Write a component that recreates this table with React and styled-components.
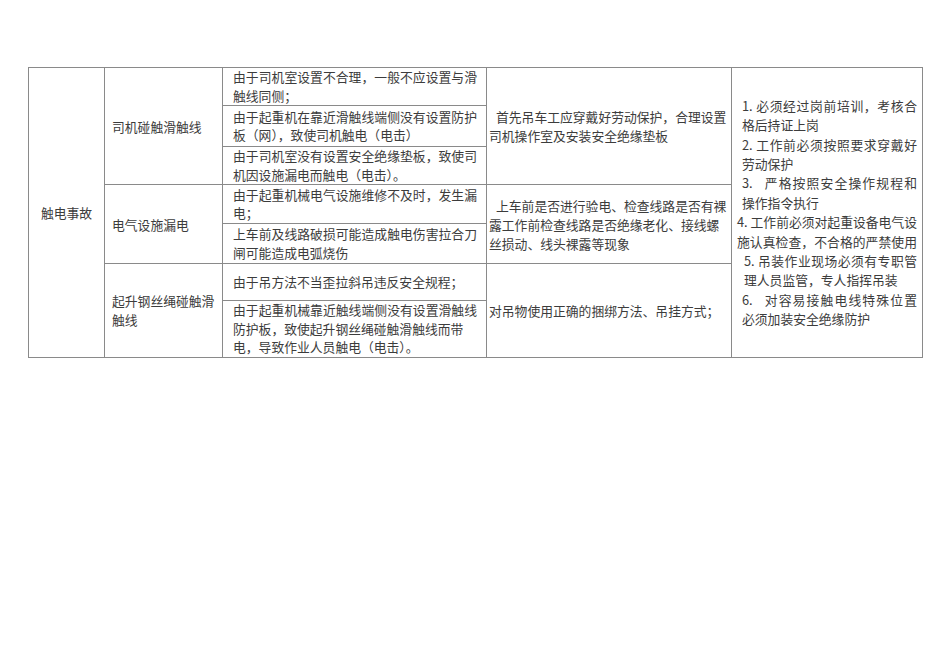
import React from "react";
import styled, { createGlobalStyle } from "styled-components";

const GlobalStyle = createGlobalStyle`
  html, body {
    margin: 0;
    padding: 0;
    background: #fff;
  }
  body {
    font-family: "Noto Sans CJK SC", "Liberation Serif", sans-serif;
    color: #333;
  }
`;

const Page = styled.div`
  width: 950px;
  height: 672px;
  padding: 67px 0 0 28px;
  box-sizing: border-box;
`;

const Table = styled.table`
  border-collapse: collapse;
  table-layout: fixed;
  width: 894px;
  font-size: 12.8px;
  color: #3c3c3c;
`;

const Row = styled.tr`
  height: ${(p) => p.h}px;
`;

const Cell = styled.td`
  border: 1px solid #8a8a8a;
  vertical-align: middle;
  padding: ${(p) => p.pad || "0 8px"};
  line-height: ${(p) => p.lh || 19}px;
  text-align: ${(p) => (p.center ? "center" : "left")};
  white-space: nowrap;
  overflow: hidden;
`;

const Line = styled.span`
  display: block;
  padding-left: ${(p) => p.indent || 0}px;
  text-align: ${(p) => (p.full ? "justify" : "left")};
  text-align-last: ${(p) => (p.full ? "justify" : "left")};
  white-space: pre;
`;

const causes = [
  { h: 38, lines: ["由于司机室设置不合理，一般不应设置与滑", "触线同侧；"] },
  { h: 41, lines: ["由于起重机在靠近滑触线端侧没有设置防护", "板（网），致使司机触电（电击）"] },
  { h: 37, lines: ["由于司机室没有设置安全绝缘垫板，致使司", "机因设施漏电而触电（电击）。"] },
  { h: 39, lines: ["由于起重机械电气设施维修不及时，发生漏", "电；"] },
  { h: 40, lines: ["上车前及线路破损可能造成触电伤害拉合刀", "闸可能造成电弧烧伤"] },
  { h: 37, lines: ["由于吊方法不当歪拉斜吊违反安全规程；"] },
  {
    h: 55,
    lines: [
      "由于起重机械靠近触线端侧没有设置滑触线",
      "防护板，致使起升钢丝绳碰触滑触线而带",
      "电，导致作业人员触电（电击）。",
    ],
  },
];

const measures = [
  { indent: 5, full: true, text: "1. 必须经过岗前培训，考核合" },
  { indent: 5, text: "格后持证上岗" },
  { indent: 5, full: true, text: "2. 工作前必须按照要求穿戴好" },
  { indent: 5, text: "劳动保护" },
  { indent: 5, full: true, text: "3.   严格按照安全操作规程和" },
  { indent: 5, text: "操作指令执行" },
  { indent: 0, full: true, text: "4. 工作前必须对起重设备电气设" },
  { indent: 0, full: true, text: "施认真检查，不合格的严禁使用" },
  { indent: 7, full: true, text: "5. 吊装作业现场必须有专职管" },
  { indent: 7, text: "理人员监管，专人指挥吊装" },
  { indent: 5, full: true, text: "6.   对容易接触电线特殊位置" },
  { indent: 5, text: "必须加装安全绝缘防护" },
];

const CauseCell = ({ lines }) => (
  <Cell lh={18.5} pad="0 9px 0 10px">
    {lines.map((l, i) => (
      <Line key={i} full={i === 0 && lines.length > 1 && l.length >= 19}>
        {l}
      </Line>
    ))}
  </Cell>
);

export default function App() {
  return (
    <>
      <GlobalStyle />
      <Page>
        <Table>
          <colgroup>
            <col style={{ width: 76 }} />
            <col style={{ width: 118 }} />
            <col style={{ width: 264 }} />
            <col style={{ width: 245 }} />
            <col style={{ width: 191 }} />
          </colgroup>
          <tbody>
            <Row h={causes[0].h}>
              <Cell rowSpan={7} center pad="0">
                触电事故
              </Cell>
              <Cell rowSpan={3} pad="0 6px 0 7px">
                司机碰触滑触线
              </Cell>
              <CauseCell lines={causes[0].lines} />
              <Cell rowSpan={3} pad="0 3px 0 2px">
                <Line indent={7}>首先吊车工应穿戴好劳动保护，合理设置</Line>
                <Line>司机操作室及安装安全绝缘垫板</Line>
              </Cell>
              <Cell rowSpan={7} lh={19.4} pad="0 5px 0 5px">
                {measures.map((m, i) => (
                  <Line key={i} indent={m.indent} full={m.full}>
                    {m.text}
                  </Line>
                ))}
              </Cell>
            </Row>
            <Row h={causes[1].h}>
              <CauseCell lines={causes[1].lines} />
            </Row>
            <Row h={causes[2].h}>
              <CauseCell lines={causes[2].lines} />
            </Row>
            <Row h={causes[3].h}>
              <Cell rowSpan={2} pad="0 6px 0 7px">
                电气设施漏电
              </Cell>
              <CauseCell lines={causes[3].lines} />
              <Cell rowSpan={2} pad="0 3px 0 2px">
                <Line indent={7}>上车前是否进行验电、检查线路是否有裸</Line>
                <Line>露工作前检查线路是否绝缘老化、接线螺</Line>
                <Line>丝损动、线头裸露等现象</Line>
              </Cell>
            </Row>
            <Row h={causes[4].h}>
              <CauseCell lines={causes[4].lines} />
            </Row>
            <Row h={causes[5].h}>
              <Cell rowSpan={2} pad="0 6px 0 7px">
                <Line>起升钢丝绳碰触滑</Line>
                <Line>触线</Line>
              </Cell>
              <CauseCell lines={causes[5].lines} />
              <Cell rowSpan={2} pad="0 3px 0 2px">
                <Line>对吊物使用正确的捆绑方法、吊挂方式；</Line>
              </Cell>
            </Row>
            <Row h={causes[6].h}>
              <CauseCell lines={causes[6].lines} />
            </Row>
          </tbody>
        </Table>
      </Page>
    </>
  );
}
